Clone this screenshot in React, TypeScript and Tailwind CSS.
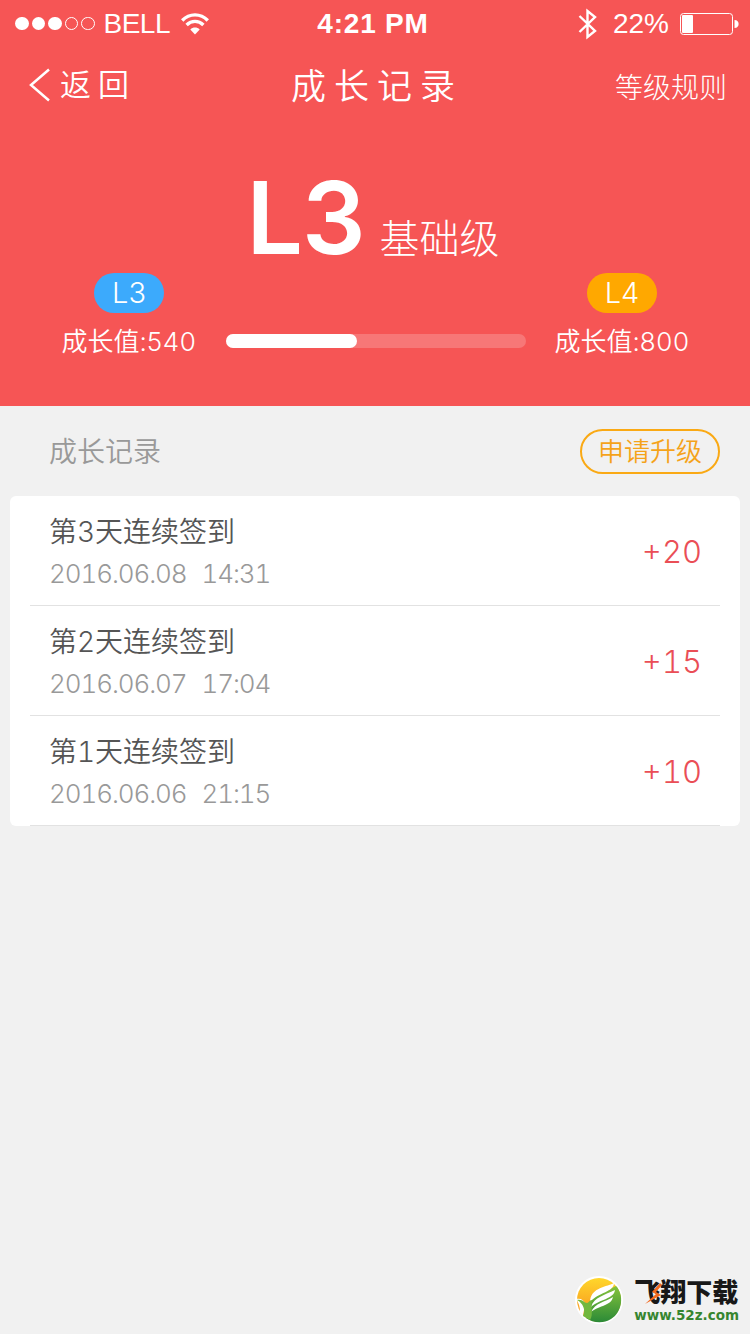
import React from 'react';

interface GrowthRecord {
  title: string;
  date: string;
  time: string;
  points: number;
}

interface LevelBadgeProps {
  level: string;
  value: number;
  color: string;
}

const records: GrowthRecord[] = [
  { title: '第3天连续签到', date: '2016.06.08', time: '14:31', points: 20 },
  { title: '第2天连续签到', date: '2016.06.07', time: '17:04', points: 15 },
  { title: '第1天连续签到', date: '2016.06.06', time: '21:15', points: 10 },
];

const StatusBar: React.FC = () => (
  <div className="grid h-[46px] grid-cols-[1fr_auto_1fr] items-center pl-[15px] pr-[11px] font-['Liberation_Sans',sans-serif] text-[27px] leading-[46px]">
    <div className="flex items-center">
      <div className="flex gap-[3px]">
        <span className="size-[13.5px] rounded-full bg-white" />
        <span className="size-[13.5px] rounded-full bg-white" />
        <span className="size-[13.5px] rounded-full bg-white" />
        <span className="size-[13.5px] rounded-full border border-white" />
        <span className="size-[13.5px] rounded-full border border-white" />
      </div>
      <span className="ml-[9px] pt-px text-[28px] tracking-[-0.5px]">BELL</span>
      <svg className="ml-[11px] h-[22px] w-7" viewBox="0 0 28 22" fill="none" stroke="#fff">
        <path d="M1.2 7.5C8.5 0 19.5 0 26.8 7.5" strokeWidth="3.4" />
        <path d="M5.6 12C10.5 7.2 17.5 7.2 22.4 12" strokeWidth="3.4" />
        <path d="M14 21.5L9.3 16.4C12 13.8 16 13.8 18.7 16.4Z" fill="#fff" stroke="none" />
      </svg>
    </div>
    <span className="-ml-2 pt-px text-[28px] font-bold tracking-[0.8px]">4:21 PM</span>
    <div className="flex items-center justify-end">
      <svg className="h-8 w-[19px]" viewBox="0 0 19 32" fill="none" stroke="#fff" strokeWidth="2.4">
        <path d="M1.5 8L17 23L9.5 29V3L17 9L1.5 24" />
      </svg>
      <span className="ml-4 pt-px text-[28px]">22%</span>
      <svg className="ml-[11px] h-[22px] w-[59px]" viewBox="0 0 59 22" fill="none">
        <rect x="0.5" y="0.5" width="52" height="21" rx="3" stroke="#fff" />
        <rect x="2" y="2" width="11" height="18" rx="1" fill="#fff" />
        <path d="M54.5 7C60 7 60 15 54.5 15Z" fill="#fff" />
      </svg>
    </div>
  </div>
);

const NavBar: React.FC = () => (
  <div className="grid h-20 grid-cols-[1fr_auto_1fr] items-center pl-[29px] pr-[23px]">
    <button className="-mt-0.5 flex items-center text-[31px] leading-[80px] tracking-[7px]">
      <svg className="mr-2.5 h-[34px] w-[21px]" viewBox="0 0 21 34" fill="none" stroke="#fff" strokeWidth="2.5">
        <path d="M20 1.5L2 17L20 32.5" />
      </svg>
      返回
    </button>
    <h1 className="-ml-0.5 text-[35px] leading-[80px] tracking-[8px]">成长记录</h1>
    <button className="justify-self-end pt-1 text-[28px] font-light">等级规则</button>
  </div>
);

const LevelBadge: React.FC<LevelBadgeProps> = ({ level, value, color }) => (
  <div className="flex w-[136px] flex-col items-center">
    <span className={`h-10 w-[70px] rounded-full text-center text-[29px] leading-10 ${color}`}>
      {level}
    </span>
    <span className="mt-2.5 whitespace-nowrap text-[26px] leading-[38px]">
      成长值:<span className="tracking-[0.6px]">{value}</span>
    </span>
  </div>
);

const SiteLogo: React.FC = () => (
  <div className="flex items-center gap-[9px]">
    <svg className="size-[50px]" viewBox="0 0 50 50">
      <defs>
        <linearGradient id="sun" x1="0" y1="0" x2="0" y2="1">
          <stop offset="0" stopColor="#ffd72b" />
          <stop offset="1" stopColor="#f78a1d" />
        </linearGradient>
        <linearGradient id="leaf" x1="0" y1="0" x2="0" y2="1">
          <stop offset="0" stopColor="#86c33b" />
          <stop offset="1" stopColor="#2b8a37" />
        </linearGradient>
      </defs>
      <circle cx="24" cy="25" r="24" fill="#fff" />
      <circle cx="24" cy="25" r="22" fill="url(#sun)" />
      <path d="M41 11C49 19 48 37 36 44C28 49 18 48 11 43C17 39 13 33 15 28C19 18 29 18 41 11Z" fill="url(#leaf)" />
      <path d="M15 27C16 13 28 13 39 8C39 17 24 17 15 27Z" fill="#fff" />
      <path d="M16 32C19 22 30 20 40 15C39 24 25 24 16 32Z" fill="#fff" />
      <path d="M16 37C20 28 30 27 38 22C36 31 25 30 16 37Z" fill="#fff" />
      <path d="M1 24C6 23 9 25 10 29L8 41L5 37C5 32 4 28 1 24Z" fill="#fff" />
      <path d="M2 25C8 24 9 28 12 28C14 28 14 25 17 25C15 31 19 39 15 45L8 41C11 35 8 28 2 25Z" fill="#72b83e" />
    </svg>
    <div className="flex flex-col">
      <div className="relative text-[26px] font-black leading-[30px] text-[#181818]">
        飞翔下载
        <svg className="absolute left-[11px] top-1 h-[23px] w-[17px]" viewBox="0 0 17 23">
          <path d="M15 1L7 10L11 12L0 22L16 13L11 10L17 3Z" fill="#f26a21" />
        </svg>
      </div>
      <span className="font-['DejaVu_Sans',sans-serif] text-[13.5px] font-bold leading-[14px] text-[#36852f]">www.52z.com</span>
    </div>
  </div>
);

export default function App() {
  return (
    <div className="flex h-[1334px] w-[750px] flex-col bg-[#f1f1f1] font-['Inter','Noto_Sans_CJK_SC',sans-serif] font-[350]">
      <header className="flex h-[406px] flex-col bg-[#f65555] text-white">
        <StatusBar />
        <NavBar />
        <div className="flex h-[147px] items-baseline justify-center pt-8">
          <span className="text-[100px] font-semibold leading-[120px] tracking-[-1px]">L3</span>
          <span className="relative -top-px ml-[15px] mr-1 text-[40px] font-light">基础级</span>
        </div>
        <div className="flex items-end justify-between pl-[61px] pr-[60px]">
          <LevelBadge level="L3" value={540} color="bg-[#3caafc]" />
          <div className="mb-[13px] h-3.5 w-[300px] rounded-full bg-white/20">
            <div className="h-full w-[131px] rounded-full bg-white" />
          </div>
          <LevelBadge level="L4" value={800} color="bg-[#ffa800]" />
        </div>
      </header>

      <div className="flex h-[90px] items-center justify-between pl-[49px] pr-[30px]">
        <h2 className="pt-0.5 text-[28px] text-[#999]">成长记录</h2>
        <button className="h-[45px] w-[140px] rounded-full border-2 border-[#faa914] text-[26px] leading-[42px] text-[#f5a31a]">
          申请升级
        </button>
      </div>

      <ul className="mx-2.5 rounded-md bg-white px-5">
        {records.map((record) => (
          <li key={record.date} className="flex h-[110px] items-center justify-between border-b border-[#e2e2e2] pl-[19px] pr-[18px] pt-1 tabular-nums">
            <div className="flex flex-col">
              <span className="text-[28px] leading-[42px] text-[#555]">{record.title}</span>
              <span className="text-[26px] leading-[42px] tracking-[-1.1px] text-[#999]">
                {record.date}
                <span className="ml-[15px]">{record.time}</span>
              </span>
            </div>
            <span className="text-[31px] font-light text-[#ea4e56]">+{record.points}</span>
          </li>
        ))}
      </ul>

      <footer className="mt-auto flex justify-end pb-[9px] pr-[11px]">
        <SiteLogo />
      </footer>
    </div>
  );
}
